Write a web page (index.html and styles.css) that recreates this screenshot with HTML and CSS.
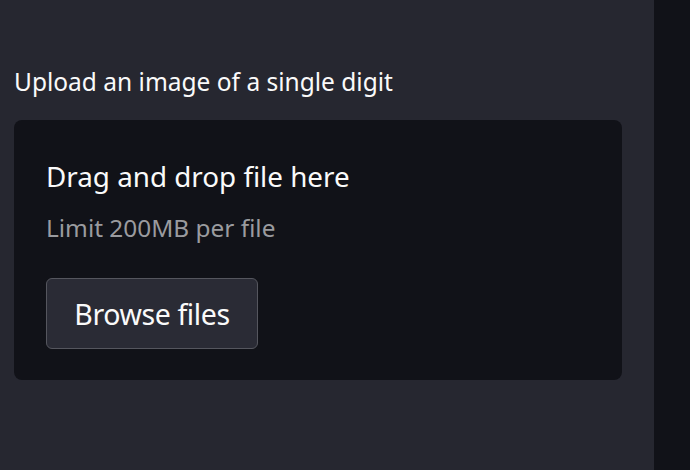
FILE: index.html
```html
<!DOCTYPE html>
<html>
<head>
<meta charset="utf-8">
<link rel="stylesheet" href="styles.css">
</head>
<body>
<div class="app">
  <section class="panel">
    <label class="label">Upload an image of a single digit</label>
    <div class="dropzone">
      <div class="instructions">
        <div class="title">Drag and drop file here</div>
        <div class="limit">Limit 200MB per file</div>
      </div>
      <button class="browse">Browse files</button>
    </div>
  </section>
  <aside class="side"></aside>
</div>
</body>
</html>
```
FILE: styles.css
```css
html, body {
  margin: 0;
  padding: 0;
  height: 100%;
}
body {
  background: #262730;
  font-family: "Noto Sans", "Open Sans", sans-serif;
  color: #fafafa;
}
.app {
  display: flex;
  height: 470px;
  width: 690px;
}
.panel {
  width: 654px;
  background: #262730;
  padding: 64px 32px 0 14px;
  box-sizing: border-box;
  display: flex;
  flex-direction: column;
}
.side {
  flex: 1;
  background: #111218;
}
.label {
  font-size: 24.5px;
  line-height: 36px;
  height: 36px;
  margin-bottom: 20px;
}
.dropzone {
  background: #111218;
  border-radius: 8px;
  height: 260px;
  box-sizing: border-box;
  padding: 38px 32px 0 32px;
  display: flex;
  flex-direction: column;
  align-items: flex-start;
}
.title {
  font-size: 27.8px;
  line-height: 36px;
}
.limit {
  font-size: 24.4px;
  line-height: 32px;
  margin-top: 18px;
  color: #9a9b9f;
}
.browse {
  margin-top: 34px;
  font-family: inherit;
  font-size: 28.5px;
  color: #fafafa;
  background: #2a2b35;
  border: 1.5px solid #55565e;
  border-radius: 6px;
  width: 212px;
  height: 71px;
  padding: 0;
  letter-spacing: -0.4px;
}
```
